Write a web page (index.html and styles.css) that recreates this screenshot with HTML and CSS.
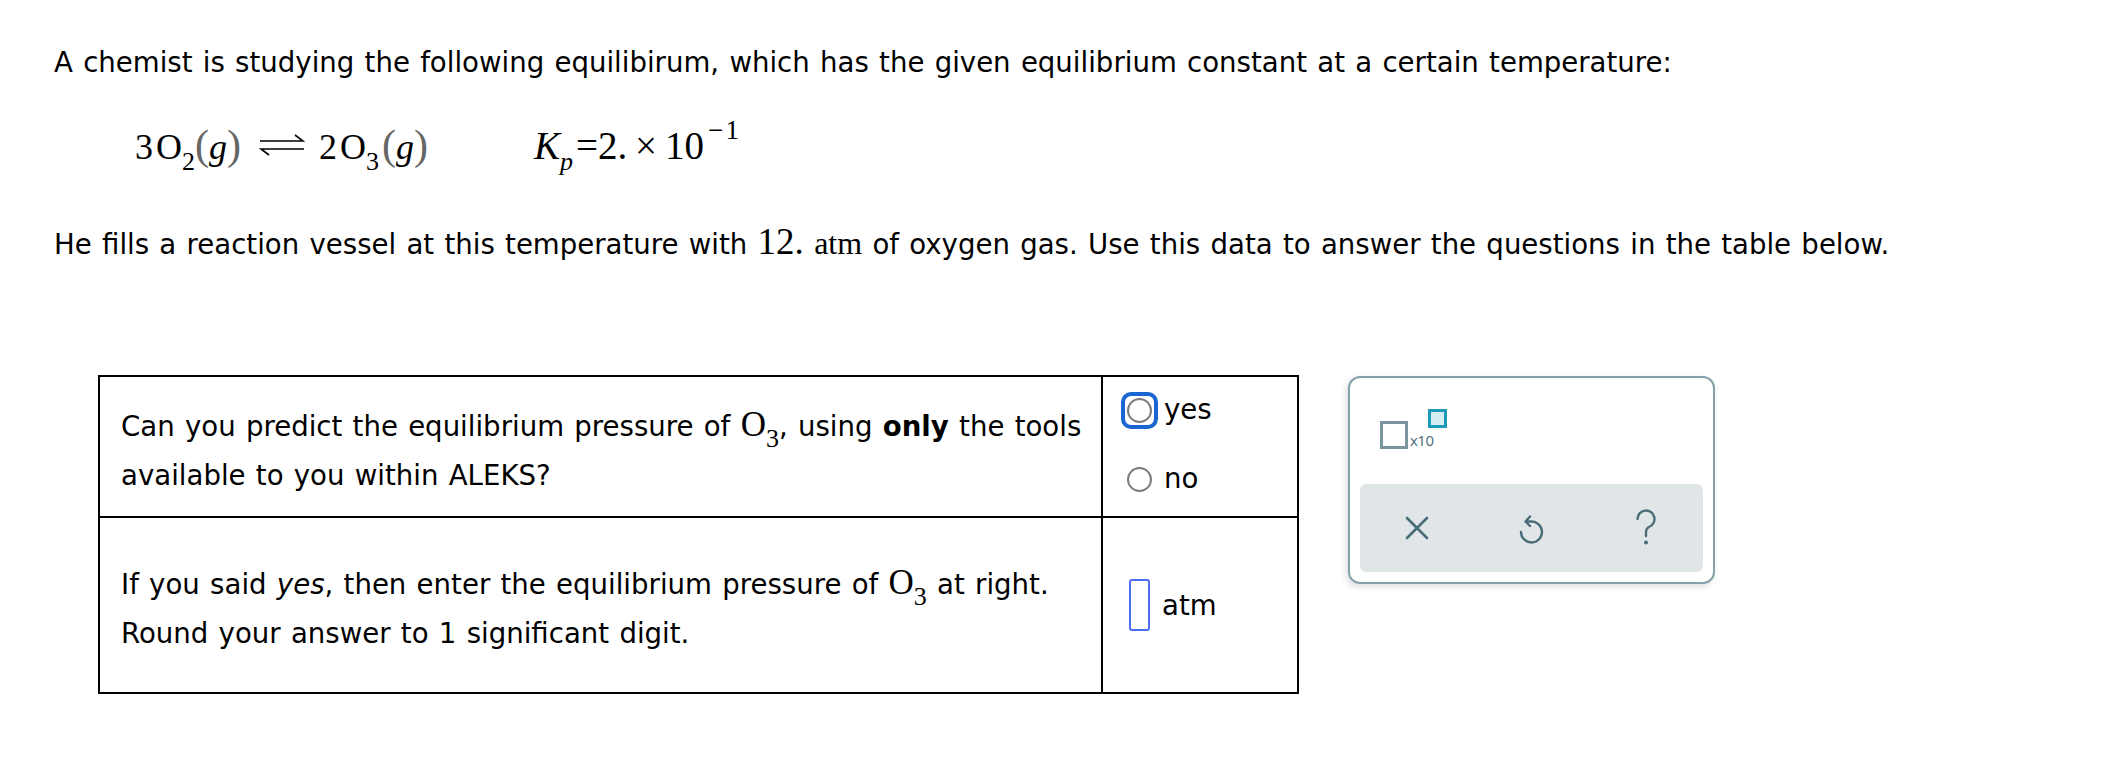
FILE: index.html
```html
<!DOCTYPE html>
<html>
<head>
    <title>ALEKS - Equilibrium</title>
    <link rel="stylesheet" href="styles.css">
</head>
<body>
    <p class="intro">A chemist is studying the following equilibirum, which has the given equilibrium constant at a certain temperature:</p>

    <div class="equation">
        <span class="math">3&#8202;O<span class="sub">2</span><span class="paren">(</span><i>g</i><span class="paren">)</span></span>
        <svg class="arrows" width="46" height="22" viewBox="0 0 46 22">
            <path d="M1 7 H44 L36 1" fill="none" stroke="#000" stroke-width="1.6"/>
            <path d="M45 15 H2 L10 21" fill="none" stroke="#000" stroke-width="1.6"/>
        </svg>
        <span class="math">2&#8202;O<span class="sub">3</span>&#8202;<span class="paren">(</span><i>g</i><span class="paren">)</span></span>
        <span class="math kp"><i>K</i><span class="sub kp-sub"><i>p</i></span>=2.&#8201;×&#8201;10<span class="sup">&minus;&#8202;1</span></span>
    </div>

    <p class="prompt">He fills a reaction vessel at this temperature with <span class="math num">12.</span> <span class="math unit">atm</span> of oxygen gas. Use this data to answer the questions in the table below.</p>

    <div class="work">
        <table class="questions">
            <tr class="row-predict">
                <td class="question">Can you predict the equilibrium pressure of <span class="math">O<span class="sub">3</span></span>, using <b>only</b> the tools available to you within ALEKS?</td>
                <td class="answer answer-top">
                    <div class="choices">
                        <label class="choice">
                            <span class="ring"><span class="radio"></span></span>
                            yes
                        </label>
                        <label class="choice">
                            <span class="ring plain"><span class="radio"></span></span>
                            no
                        </label>
                    </div>
                </td>
            </tr>
            <tr class="row-enter">
                <td class="question">If you said <i>yes</i>, then enter the equilibrium pressure of <span class="math">O<span class="sub">3</span></span> at right.<br>Round your answer to 1 significant digit.</td>
                <td class="answer">
                    <div class="entry">
                        <span class="input-box"></span>
                        atm
                    </div>
                </td>
            </tr>
        </table>

        <div class="panel">
            <div class="templates">
                <span class="sci">
                    <span class="sci-base"></span>
                    <span class="sci-x">x10</span>
                    <span class="sci-exp"></span>
                </span>
            </div>
            <div class="toolbar">
                <button class="tool" title="Clear">
                    <svg width="24" height="24" viewBox="0 0 24 24">
                        <path d="M2 2 L22 22 M22 2 L2 22" stroke="#4a6b78" stroke-width="2.6" stroke-linecap="round"/>
                    </svg>
                </button>
                <button class="tool" title="Undo">
                    <svg width="28" height="34" viewBox="0 0 28 34">
                        <path d="M4 21 A10.5 10.5 0 1 0 14 10.5 H9" fill="none" stroke="#4a6b78" stroke-width="2.4" stroke-linecap="round"/>
                        <path d="M13 5.5 L8.5 10.5 L13 15" fill="none" stroke="#4a6b78" stroke-width="2.4" stroke-linecap="round" stroke-linejoin="round"/>
                    </svg>
                </button>
                <button class="tool" title="Help">
                    <svg width="24" height="38" viewBox="0 0 24 38">
                        <path d="M3.5 10 A8.5 8.5 0 1 1 15 18 Q12 19.5 12 23 V27" fill="none" stroke="#4a6b78" stroke-width="2.4" stroke-linecap="round"/>
                        <circle cx="12" cy="33.5" r="2" fill="#4a6b78"/>
                    </svg>
                </button>
            </div>
        </div>
    </div>
</body>
</html>
```

FILE: styles.css
```css
body {
    margin: 0;
    padding: 43px 0 0 54px;
    background: #fff;
    color: #000;
    font-family: 'DejaVu Sans', Verdana, sans-serif;
    font-size: 27.6px;
    word-spacing: 1.5px;
}
.intro {
    margin: 0;
    line-height: 40px;
}
.math {
    font-family: 'Liberation Serif', 'Times New Roman', serif;
    font-size: 36px;
    line-height: 1;
    word-spacing: 0;
}
.math .sub {
    font-size: 26px;
    vertical-align: -11px;
    line-height: 0;
}
.math .kp-sub {
    margin-right: 3px;
}
.math .sup {
    font-size: 27px;
    vertical-align: 20px;
    line-height: 0;
    margin-left: 4px;
}
.paren {
    color: #666;
    font-size: 42px;
    line-height: 0;
}
.equation {
    display: flex;
    align-items: baseline;
    margin: 43px 0 0 81px;
    height: 50px;
}
.arrows {
    align-self: flex-start;
    margin: 8px 14px 0 18px;
    flex-shrink: 0;
}
.kp {
    margin-left: 106px;
    font-size: 39px;
}
.prompt {
    margin: 47px 0 0;
    line-height: 40px;
}
.prompt .num {
    font-size: 37px;
}
.prompt .unit {
    font-size: 32px;
}
.work {
    display: flex;
    align-items: flex-start;
    gap: 49px;
    margin: 110px 0 0 44px;
}
.questions {
    border-collapse: collapse;
    width: 1201px;
}
.questions td {
    border: 2px solid #000;
    line-height: 49px;
}
.row-predict {
    height: 141px;
}
.row-enter {
    height: 176px;
}
.question {
    padding: 8px 18px 0 21px;
    width: 962px;
}
.question .math {
    font-size: 35px;
}
.answer {
    padding: 0 0 0 18px;
    vertical-align: middle;
}
.answer-top {
    vertical-align: top;
    padding-top: 14px;
}
.choices {
    display: flex;
    flex-direction: column;
    gap: 31px;
}
.choice {
    display: flex;
    align-items: center;
    gap: 6px;
    height: 38px;
    line-height: 38px;
}
.ring {
    display: flex;
    align-items: center;
    justify-content: center;
    width: 37px;
    height: 37px;
    box-sizing: border-box;
    border: 4px solid #1b67d1;
    border-radius: 10px;
}
.ring.plain {
    border-color: transparent;
}
.radio {
    width: 25px;
    height: 25px;
    box-sizing: border-box;
    border: 2px solid #7c7c7c;
    border-radius: 50%;
    background: #fff;
}
.entry {
    display: flex;
    align-items: center;
    gap: 12px;
    padding-left: 8px;
}
.input-box {
    width: 21px;
    height: 52px;
    box-sizing: border-box;
    border: 2px solid #4e6bf4;
    border-radius: 3px;
}
.panel {
    width: 367px;
    height: 208px;
    margin-top: 1px;
    box-sizing: border-box;
    border: 2px solid #86a0a9;
    border-radius: 12px;
    padding: 10px;
    display: flex;
    flex-direction: column;
    box-shadow: -2px 3px 6px rgba(60, 80, 90, 0.18);
}
.templates {
    padding: 21px 0 0 20px;
}
.sci {
    display: inline-flex;
    align-items: flex-end;
    position: relative;
    height: 40px;
}
.sci-base {
    width: 28px;
    height: 28px;
    box-sizing: border-box;
    border: 3px solid #7a959e;
}
.sci-x {
    font-family: 'Open Sans', sans-serif;
    font-size: 15px;
    line-height: 15px;
    color: #4c6b77;
    margin: 0 0 1px 2px;
    letter-spacing: -0.5px;
    word-spacing: 0;
}
.sci-exp {
    position: absolute;
    top: 0;
    left: 48px;
    width: 19px;
    height: 19px;
    box-sizing: border-box;
    border: 3px solid #1c9ab6;
    background: #d3eff4;
}
.toolbar {
    margin-top: auto;
    height: 88px;
    display: flex;
    background: #e0e6e8;
    border-radius: 6px;
}
.tool {
    flex: 1;
    display: flex;
    align-items: center;
    justify-content: center;
    border: none;
    background: transparent;
    padding: 0;
    cursor: pointer;
}
```
